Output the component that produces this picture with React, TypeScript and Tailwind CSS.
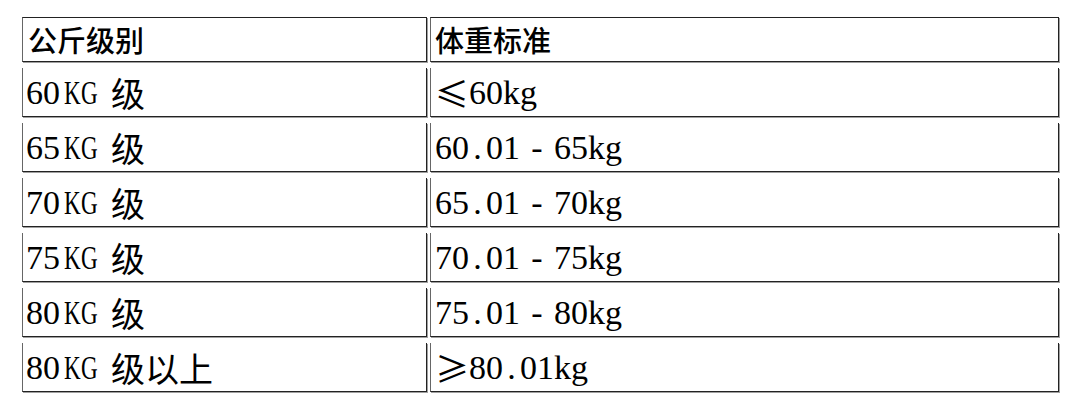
import { Fragment } from 'react';

const rows = [
  { level: '60KG 级', weight: '≤60kg' },
  { level: '65KG 级', weight: '60.01-65kg' },
  { level: '70KG 级', weight: '65.01-70kg' },
  { level: '75KG 级', weight: '70.01-75kg' },
  { level: '80KG 级', weight: '75.01-80kg' },
  { level: '80KG 级以上', weight: '≥80.01kg' },
];

// mimics a Song-style font: half-width latin, full-width cjk and symbols
function SongText({ text }: { text: string }) {
  return (
    <span className="inline-flex text-[34px] leading-none text-black">
      {Array.from(text).map((ch, i) => {
        if (/[\u4e00-\u9fff]/.test(ch) || ch === '≤' || ch === '≥') {
          return (
            <span key={i} className="inline-block w-[1em] text-center font-[Noto_Sans_CJK_SC] font-normal">
              {ch}
            </span>
          );
        }
        if (ch === '-') {
          return (
            <span key={i} className="inline-block w-[1em] text-center font-[Liberation_Serif]">
              {ch}
            </span>
          );
        }
        if (ch === 'K' || ch === 'G') {
          return (
            <span key={i} className="inline-block w-[0.5em] text-center font-[Liberation_Serif]">
              <span className="inline-block scale-x-[0.68]">{ch}</span>
            </span>
          );
        }
        return (
          <span key={i} className="inline-block w-[0.5em] whitespace-pre text-center font-[Liberation_Serif]">
            {ch}
          </span>
        );
      })}
    </span>
  );
}

export default function App() {
  return (
    <div className="min-h-[417px] w-[1080px] bg-white pl-[22px] pt-[17px]">
      <div className="grid grid-cols-[405px_629px] gap-x-[3px] gap-y-[6px]">
        <div className="flex h-[45px] items-center border border-[#222] border-l-[#666] pl-[5px] shadow-[1px_1px_0_#a0a0a0] font-[Noto_Sans_CJK_SC] text-[29px] font-medium leading-none text-black">
          公斤级别
        </div>
        <div className="flex h-[45px] items-center border border-[#222] border-l-[#666] pl-[4px] shadow-[1px_1px_0_#a0a0a0] font-[Noto_Sans_CJK_SC] text-[29px] font-medium leading-none text-black">
          体重标准
        </div>
        {rows.map((r) => (
          <Fragment key={r.level}>
            <div className="flex h-[49px] items-center border-x border-b border-[#222] border-l-[#666] pl-[3px] pt-[2px] shadow-[1px_1px_0_#a0a0a0]">
              <SongText text={r.level} />
            </div>
            <div className="flex h-[49px] items-center border-x border-b border-[#222] border-l-[#666] pl-[4px] pt-[2px] shadow-[1px_1px_0_#a0a0a0]">
              <SongText text={r.weight} />
            </div>
          </Fragment>
        ))}
      </div>
    </div>
  );
}
